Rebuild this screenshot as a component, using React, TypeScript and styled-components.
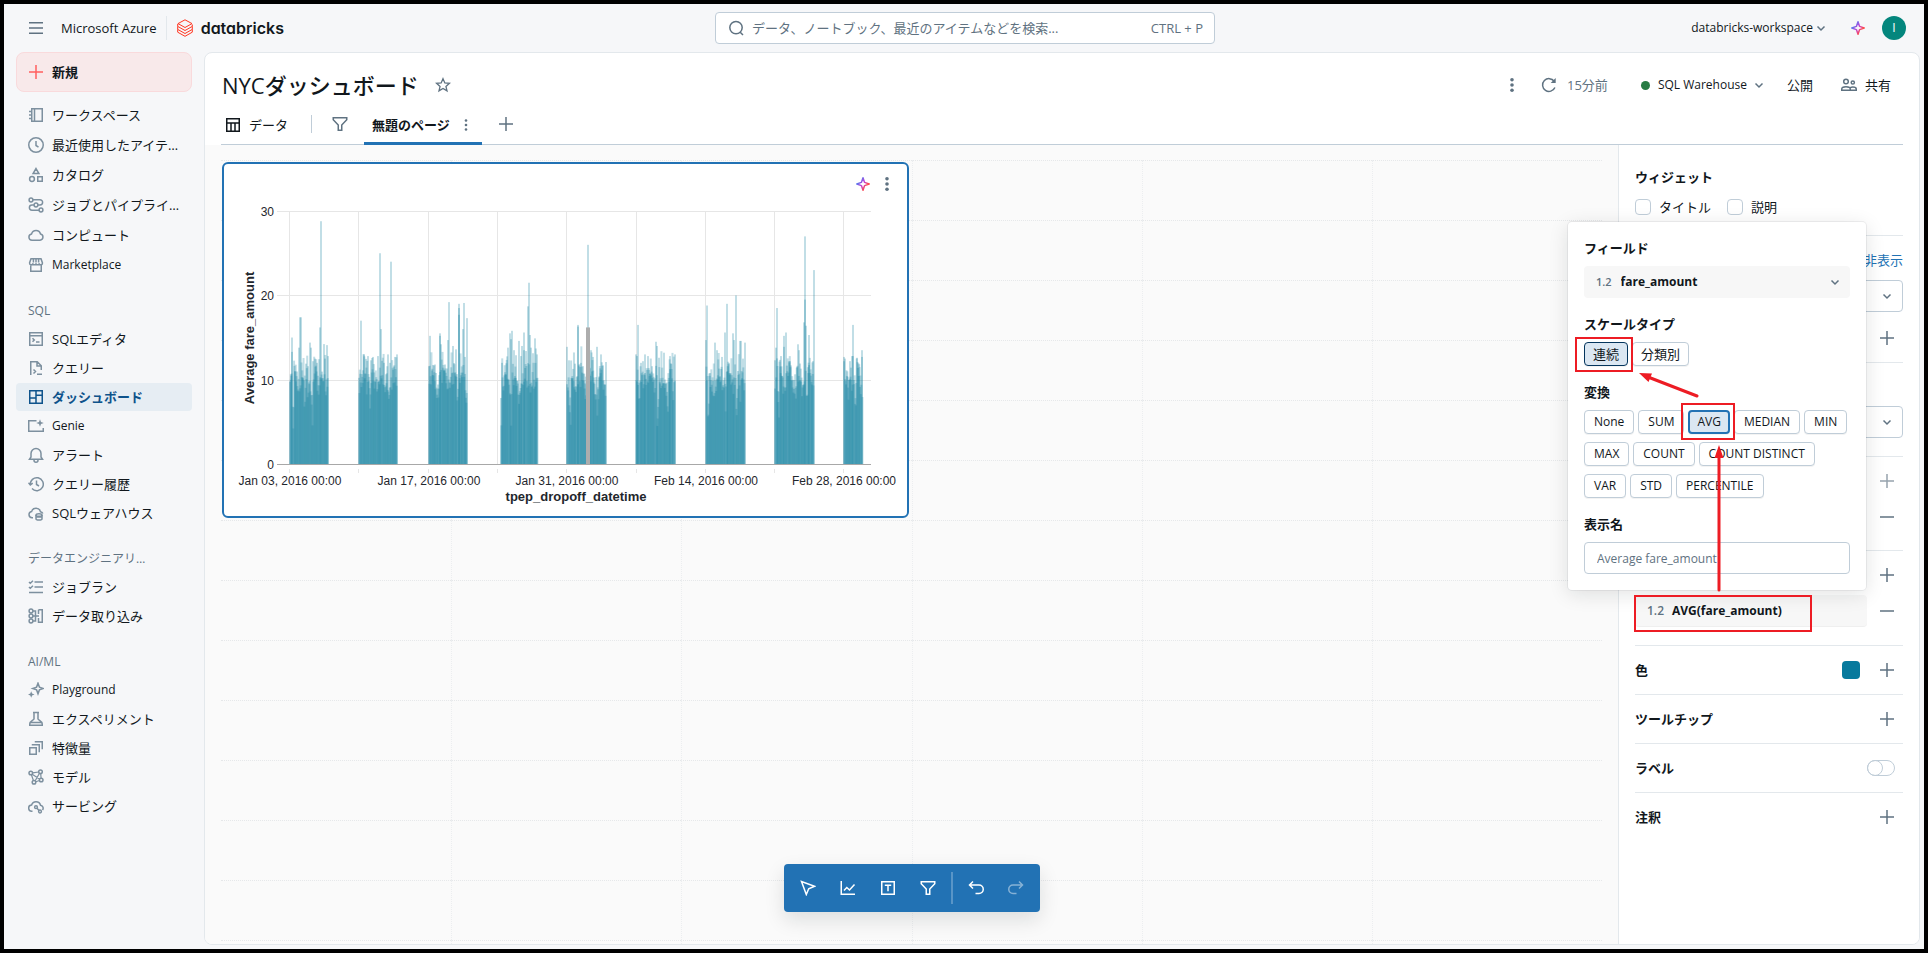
import React from 'react';
import styled, { createGlobalStyle, css } from 'styled-components';

const color = {
  text: '#11171c',
  muted: '#5f7281',
  icon: '#7d909f',
  line: '#c0cdd8',
  softLine: '#e3e8ec',
  blue: '#2272b4',
  chrome: '#f6f7f9',
  canvas: '#fafafa',
  field: '#f7f7f7',
  series: '#077a9d',
  mark: '#ed1c24',
};

const GlobalStyle = createGlobalStyle`
  *, *::before, *::after { box-sizing: border-box; }
  body {
    margin: 0;
    background: #000;
    color: ${color.text};
    font-family: "Open Sans", "Noto Sans CJK JP", sans-serif;
    font-size: 13px;
    line-height: 20px;
  }
  button, input, select { font: inherit; color: inherit; }
  svg { display: block; flex: none; }
`;

/* ---------- icons ---------- */

const Svg16 = styled.svg.attrs({ viewBox: '0 0 16 16', width: 16, height: 16, 'aria-hidden': true })`
  fill: none;
  stroke: currentColor;
  stroke-width: 1.5;
`;

const icons: Record<string, React.ReactNode> = {
  menu: <path d="M1 2.75h14M1 8h14M1 13.25h14" />,
  plus: <path d="M8 1v14M1 8h14" />,
  minus: <path d="M1 8h14" />,
  chevron: <path d="M4.5 6.5 8 10l3.5-3.5" />,
  kebab: (
    <g fill="currentColor" stroke="none">
      <circle cx="8" cy="2.7" r="1.8" />
      <circle cx="8" cy="8" r="1.8" />
      <circle cx="8" cy="13.3" r="1.8" />
    </g>
  ),
  kebabSmall: (
    <g fill="currentColor" stroke="none">
      <circle cx="8" cy="3.5" r="1.3" />
      <circle cx="8" cy="8" r="1.3" />
      <circle cx="8" cy="12.5" r="1.3" />
    </g>
  ),
  search: (
    <>
      <circle cx="8" cy="7.6" r="6.2" />
      <path d="m12.2 12.2 2.8 2.8" />
    </>
  ),
  notebook: <path d="M3.75 1.75h10.5v12.5H3.75zM6.5 1.75v12.5M1 4.5h2.5M1 8h2.5M1 11.5h2.5" />,
  clock: (
    <>
      <circle cx="8" cy="8" r="7.25" />
      <path d="M8 4v4.5l2.5 1.6" />
    </>
  ),
  catalog: (
    <>
      <path d="m8 1.6 2.9 5H5.1zM9.75 9.75h4.5v4.5h-4.5z" />
      <circle cx="4" cy="12" r="2.4" />
    </>
  ),
  jobs: (
    <>
      <circle cx="3" cy="3" r="1.9" />
      <circle cx="13" cy="13" r="1.9" />
      <circle cx="8" cy="8" r="1.9" />
      <path d="M5 2.75h7a2.6 2.6 0 0 1 0 5.2h-2M6 8H4a2.6 2.6 0 0 0 0 5.2h7" />
    </>
  ),
  cloud: <path d="M4 13.25h8a3.2 3.2 0 0 0 .5-6.3A4.6 4.6 0 0 0 3.6 6.9 3.2 3.2 0 0 0 4 13.25z" />,
  store: <path d="M2.75 8.5v5.75h10.5V8.5M3 1.75h10l1.4 4v.5a1.6 1.6 0 0 1-3.2 0 1.6 1.6 0 0 1-3.2 0 1.6 1.6 0 0 1-3.2 0 1.6 1.6 0 0 1-3.2 0v-.5zM5.4 2v3.5M8 2v3.5M10.6 2v3.5" />,
  editor: <path d="M1.75 1.75h12.5v12.5H1.75zM1.75 4.75h12.5M4.5 7.2l1.8 1.8-1.8 1.8M8 11h3.5" />,
  query: <path d="M2.75 15V1.75h6.5l4 4V10M9 2v4h4M5.5 9.5l2 2-2 2M9 14.25h5" />,
  dashboard: <path d="M1.75 1.75h12.5v12.5H1.75zM8 1.75v12.5M1.75 9H8M8 6.2h6.25" />,
  genie: (
    <>
      <path d="M8.5 2.75H.75v10.5h14.5V10" />
      <path d="m12 1.2 1 2.8 2.8 1-2.8 1-1 2.8-1-2.8-2.8-1 2.8-1z" fill="currentColor" stroke="none" />
    </>
  ),
  bell: <path d="M1.5 12.25h13L13 10V6.5a5 5 0 0 0-10 0V10zM6 12.5v.7a2 2 0 0 0 4 0v-.7" />,
  history: <path d="M2.3 8.8a6.5 6.5 0 1 1 1.7 3.8M.5 6.8l1.8 2.2 2.4-1.8M8.5 4.5v4l2.5 1.5" />,
  warehouse: (
    <>
      <path d="M5 12.75H4A3.1 3.1 0 0 1 3.6 6.6a4.6 4.6 0 0 1 8.9.2c1.2.2 2 .9 2.4 1.7" />
      <ellipse cx="11" cy="10" rx="3" ry="1.3" />
      <path d="M8 10v3.7c0 .7 1.3 1.3 3 1.3s3-.6 3-1.3V10M8 12h6" />
    </>
  ),
  checklist: <path d="M6.5 3H15M6.5 8H15M1 13.5h14M1 3l1.3 1.3L5 1.8M1 8l1.3 1.3L5 6.8" />,
  ingest: (
    <>
      <circle cx="3" cy="3" r="1.9" />
      <circle cx="3" cy="8" r="1.9" />
      <circle cx="3" cy="13" r="1.9" />
      <path d="M5 3h2.5v10H5M5 8h6M10.5 1.75h3.75v12.5H10.5V10M10.5 1.75V6" />
    </>
  ),
  playground: (
    <>
      <path d="m10 1.2 1.4 3.9 3.9 1.4-3.9 1.4L10 11.8 8.6 7.9 4.7 6.5l3.9-1.4z" />
      <path d="m3.2 9.2.9 2.4 2.4.9-2.4.9-.9 2.4-.9-2.4-2.4-.9 2.4-.9z" fill="currentColor" stroke="none" />
    </>
  ),
  experiment: <path d="M5 1.5h6M6 1.5V8c0 1-4.25 2-4.25 5v1.25h12.5V13c0-3-4.25-4-4.25-5V1.5M2 11.5h12" />,
  features: <path d="M1.75 7.75h6.5v6.5h-6.5zM4.5 5.5v-.75h6.75v6.75h-.75M7.5 2.5v-.75h6.75V8.5h-.75" />,
  model: (
    <>
      <circle cx="2.8" cy="4" r="1.8" />
      <circle cx="12.5" cy="2.8" r="1.8" />
      <circle cx="13.2" cy="11" r="1.8" />
      <circle cx="6" cy="13.2" r="1.8" />
      <path d="m4.6 3.8 6.1-.8M12.7 4.6l.4 4.6M11.5 11.5l-3.7 1.2M3.4 5.8l2 5.7M4.2 5.2l7.3 4.7M7.2 11.7l4.3-7.5" strokeWidth="1.2" />
    </>
  ),
  serving: (
    <>
      <path d="M4.5 13.25H4A3.1 3.1 0 0 1 3.6 7a4.6 4.6 0 0 1 8.9.2A3 3 0 0 1 14.5 12" />
      <circle cx="8" cy="9.2" r="1.4" />
      <circle cx="12" cy="13.5" r="1.4" />
      <path d="m9 10.2 2 2.3" />
    </>
  ),
  star: <path d="m8 1.7 1.85 4.25 4.6.4-3.5 3.05L12 13.9l-4-2.4-4 2.4 1.05-4.5-3.5-3.05 4.6-.4z" strokeWidth="1.3" />,
  refresh: (
    <>
      <path d="M13.9 10.5A6.4 6.4 0 1 1 13.2 4.3" />
      <path d="M14.7 1v5h-5z" fill="currentColor" stroke="none" />
    </>
  ),
  people: (
    <>
      <circle cx="5" cy="4.5" r="2.3" />
      <circle cx="11.8" cy="5.5" r="1.6" />
      <path d="M.75 13.25V12c0-1.3 2-2.3 4.25-2.3s4.25 1 4.25 2.3v1.25zM9.5 13.25h5.75V12c0-1.1-1.4-2-3.4-2-1 0-1.9.2-2.6.6" />
    </>
  ),
  table: <path d="M1.75 1.75h12.5v12.5H1.75zM1.75 6h12.5M6 6v8.25M10 6v8.25" />,
  filter: <path d="M1.25 1.75h13.5v2L9.75 9v5.25h-3.5V9l-5-5.25z" />,
  cursor: <path d="m1.5 1.5 4.8 13 2.4-5.8 5.8-2.4z" />,
  chart: <path d="M1.25 1v13.25H15M4 10.5l2.8-3 2.7 2.5 5-5.5" />,
  textBox: <path d="M1.75 1.75h12.5v12.5H1.75zM4.8 5.2h6.4M8 5.2v6" />,
  undo: <path d="M5 1.5 1.5 5 5 8.5M1.8 5H11a4.25 4.25 0 0 1 0 8.5H7.5" />,
  redo: <path d="M11 1.5 14.5 5 11 8.5M14.2 5H5a4.25 4.25 0 0 0 0 8.5h3.5" />,
};

const Icon = ({ name }: { name: string }) => <Svg16>{icons[name]}</Svg16>;

const Sparkle = ({ id }: { id: string }) => (
  <Svg16>
    <defs>
      <linearGradient id={id} x1="2" y1="4" x2="13" y2="12" gradientUnits="userSpaceOnUse">
        <stop offset="0.1" stopColor="#4a7ff0" />
        <stop offset="0.5" stopColor="#c145d8" />
        <stop offset="0.85" stopColor="#ff4b4b" />
      </linearGradient>
    </defs>
    <path
      stroke={`url(#${id})`}
      strokeLinejoin="round"
      d="M8 1.8 9.6 6.4 14.2 8 9.6 9.6 8 14.2 6.4 9.6 1.8 8 6.4 6.4z"
    />
  </Svg16>
);

const LogoMark = () => (
  <svg width="16" height="18" viewBox="0 0 16 18" fill="none" stroke="#ff3621" strokeWidth="1" aria-hidden>
    <path d="M8 .8 1 4.6l7 3.9 7-3.9z" />
    <path d="M.7 4.8v2.6L8 11.5l7.3-4.1V5.5M.7 7.4v3L8 14.5l7.3-4.1v-3M.7 10.4v2.8L8 17.3l7.3-4.1v-2.8" />
  </svg>
);

/* ---------- shell ---------- */

const Frame = styled.div`
  display: flex;
  flex-direction: column;
  height: 100vh;
  min-height: 840px;
  border: 4px solid #000;
  background: ${color.chrome};
`;

const TopBar = styled.header`
  display: grid;
  grid-template-columns: 1fr minmax(0, 500px) 1fr;
  align-items: center;
  height: 48px;
  padding: 0 18px 0 20px;
  flex: none;
`;

const Brand = styled.div`
  display: flex;
  align-items: center;
  padding-left: 4px;
`;

const IconButton = styled.button<{ $size?: number }>`
  display: inline-flex;
  align-items: center;
  justify-content: center;
  width: ${(p) => p.$size ?? 16}px;
  height: ${(p) => p.$size ?? 16}px;
  padding: 0;
  border: 0;
  background: none;
  color: ${color.muted};
  flex: none;
`;

const Latin = styled.span`
  font-size: 12px;
`;

const Cloud = styled.span`
  margin-left: 17px;
  padding-right: 9px;
  font-size: 13px;
  line-height: 24px;
  border-right: 1px solid ${color.softLine};
  white-space: nowrap;
`;

const Wordmark = styled.a`
  display: flex;
  align-items: center;
  gap: 8px;
  margin-left: 10px;
  color: ${color.text};
  text-decoration: none;
  font-family: Inter, sans-serif;
  font-feature-settings: "cv11";
  font-size: 16px;
  font-weight: 600;
`;

const SearchBox = styled.label`
  display: flex;
  align-items: center;
  gap: 8px;
  height: 32px;
  padding: 0 11px 0 12px;
  border: 1px solid ${color.line};
  border-radius: 4px;
  background: #fff;
  color: ${color.muted};

  input {
    flex: 1;
    min-width: 0;
    padding: 0;
    border: 0;
    outline: 0;
    background: none;
  }
  input::placeholder { color: ${color.muted}; opacity: 1; }
`;

const Account = styled.div`
  display: flex;
  align-items: center;
  justify-content: flex-end;
`;

const PlainButton = styled.button<{ $gap?: number }>`
  display: inline-flex;
  align-items: center;
  gap: ${(p) => p.$gap ?? 8}px;
  height: 32px;
  padding: 0;
  border: 0;
  background: none;
  white-space: nowrap;

  svg { color: ${color.muted}; }
`;

const WorkspaceButton = styled(PlainButton)`
  margin-right: 21px;
`;

const Avatar = styled.button`
  width: 24px;
  height: 24px;
  margin-left: 16px;
  padding: 0;
  border: 0;
  border-radius: 50%;
  background: #04867d;
  color: #fff;
  font-size: 12px;
  line-height: 24px;
`;

const Body = styled.div`
  display: flex;
  flex: 1;
  min-height: 0;
  padding: 0 4px 4px 0;
`;

/* ---------- side navigation ---------- */

const Nav = styled.nav`
  width: 200px;
  flex: none;
  padding: 0 12px;
`;

const NewButton = styled.button`
  display: flex;
  align-items: center;
  gap: 8px;
  width: 100%;
  height: 40px;
  padding: 0 11px;
  border: 1px solid #f9dadc;
  border-radius: 8px;
  background: #f8e9ea;
  font-weight: 600;

  svg { color: #ff5f5f; }
`;

const NavList = styled.ul<{ $rowHeight: number; $top: number }>`
  display: grid;
  grid-auto-rows: ${(p) => p.$rowHeight}px;
  gap: 1px;
  margin: ${(p) => p.$top}px 0 0;
  padding: 0;
  list-style: none;
`;

const NavLink = styled.a<{ $active?: boolean }>`
  display: flex;
  align-items: center;
  gap: 8px;
  height: 100%;
  padding-left: 12px;
  border-radius: 4px;
  color: ${color.text};
  text-decoration: none;
  white-space: nowrap;

  svg { color: ${color.icon}; }

  ${(p) =>
    p.$active &&
    css`
      background: #e6edf3;
      color: #0e538b;
      font-weight: 600;
      svg { color: #0e538b; }
    `}
`;

const NavHeading = styled.h2`
  margin: 22px 0 0 12px;
  color: ${color.muted};
  font-size: 12px;
  font-weight: 400;
  line-height: 20px;
`;

type NavEntry = { icon: string; label: string; latin?: boolean; active?: boolean };

const mainNav: NavEntry[] = [
  { icon: 'notebook', label: 'ワークスペース' },
  { icon: 'clock', label: '最近使用したアイテ…' },
  { icon: 'catalog', label: 'カタログ' },
  { icon: 'jobs', label: 'ジョブとパイプライ…' },
  { icon: 'cloud', label: 'コンピュート' },
  { icon: 'store', label: 'Marketplace', latin: true },
];

const navGroups: { title: string; items: NavEntry[] }[] = [
  {
    title: 'SQL',
    items: [
      { icon: 'editor', label: 'SQLエディタ' },
      { icon: 'query', label: 'クエリー' },
      { icon: 'dashboard', label: 'ダッシュボード', active: true },
      { icon: 'genie', label: 'Genie', latin: true },
      { icon: 'bell', label: 'アラート' },
      { icon: 'history', label: 'クエリー履歴' },
      { icon: 'warehouse', label: 'SQLウェアハウス' },
    ],
  },
  {
    title: 'データエンジニアリ…',
    items: [
      { icon: 'checklist', label: 'ジョブラン' },
      { icon: 'ingest', label: 'データ取り込み' },
    ],
  },
  {
    title: 'AI/ML',
    items: [
      { icon: 'playground', label: 'Playground', latin: true },
      { icon: 'experiment', label: 'エクスペリメント' },
      { icon: 'features', label: '特徴量' },
      { icon: 'model', label: 'モデル' },
      { icon: 'serving', label: 'サービング' },
    ],
  },
];

const NavItems = ({ items, rowHeight, top }: { items: NavEntry[]; rowHeight: number; top: number }) => (
  <NavList $rowHeight={rowHeight} $top={top}>
    {items.map((item) => (
      <li key={item.label}>
        <NavLink href="#" $active={item.active} aria-current={item.active ? 'page' : undefined}>
          <Icon name={item.icon} />
          {item.latin ? <Latin>{item.label}</Latin> : <span>{item.label}</span>}
        </NavLink>
      </li>
    ))}
  </NavList>
);

/* ---------- dashboard header ---------- */

const Main = styled.main`
  display: flex;
  flex-direction: column;
  flex: 1;
  min-width: 0;
  border: 1px solid ${color.softLine};
  border-radius: 8px;
  background: #fff;
  overflow: hidden;
`;

const TitleRow = styled.div`
  display: flex;
  align-items: center;
  height: 32px;
  margin: 16px 16px 0 17px;
  flex: none;
`;

const Title = styled.h1`
  margin: 0 16px 0 0;
  font-size: 22px;
  font-weight: 500;
  line-height: 32px;
  white-space: nowrap;
`;

const Actions = styled.div`
  display: flex;
  align-items: center;
  gap: 4px;
  margin-left: auto;
`;

const RefreshButton = styled(PlainButton)`
  margin: 0 17px 0 17px;
  color: ${color.muted};
`;

const ActionButton = styled(PlainButton)`
  padding: 0 12px;
`;

const WarehouseButton = styled(PlainButton)`
  padding: 0 4px 0 12px;

  &::before {
    content: "";
    width: 9px;
    height: 9px;
    margin-right: 4px;
    border-radius: 50%;
    background: #277c43;
  }
`;

const Tabs = styled.div`
  display: flex;
  align-items: center;
  height: 41px;
  margin: 3px 16px 0;
  border-bottom: 1px solid ${color.line};
  flex: none;
`;

const Tab = styled.div<{ $active?: boolean }>`
  display: flex;
  align-items: center;
  gap: 8px;
  height: 41px;
  margin-bottom: -1px;
  padding: 0 8px 0 4px;

  ${(p) =>
    p.$active &&
    css`
      margin-left: 16px;
      margin-right: 16px;
      padding: 3px 8px 0;
      border-bottom: 3px solid ${color.blue};
      font-weight: 600;
    `}
`;

const TabDivider = styled.span`
  width: 1px;
  height: 18px;
  margin: 0 20px 0 15px;
  background: ${color.line};
`;

/* ---------- canvas ---------- */

const Workspace = styled.div`
  display: flex;
  flex: 1;
  min-height: 0;
`;

const Canvas = styled.section`
  position: relative;
  flex: 1;
  min-width: 0;
  padding: 15px 16px 0;
  background: ${color.canvas};
  overflow: hidden;
`;

const Board = styled.div`
  display: grid;
  grid-template-columns: repeat(6, minmax(0, 1fr));
  grid-auto-rows: 60px;
  height: 100%;
  overflow: hidden;
`;

const Cell = styled.div<{ $row: number; $column: number }>`
  grid-row: ${(p) => p.$row};
  grid-column: ${(p) => p.$column};
  border-top: 1px dotted #e6e8ea;
  border-left: ${(p) => (p.$column > 1 ? '1px dotted #eceef0' : '0')};
`;

const Widget = styled.article`
  grid-row: 1 / 7;
  grid-column: 1 / 4;
  z-index: 1;
  margin: 2px 3px 2px 1px;
  border: 2px solid ${color.blue};
  border-radius: 6px;
  background: #fff;
  overflow: hidden;
`;

const WidgetHeader = styled.div`
  display: flex;
  align-items: center;
  justify-content: flex-end;
  height: 40px;
  padding-right: 8px;
`;

const Plot = styled.svg`
  font-family: "Liberation Sans", Arial, sans-serif;
  font-size: 12px;
  fill: #1f272d;
`;

const Toolbar = styled.div`
  position: absolute;
  z-index: 2;
  left: 50%;
  bottom: 32px;
  transform: translateX(-50%);
  display: flex;
  align-items: center;
  height: 48px;
  padding: 0 4px;
  border-radius: 4px;
  background: ${color.blue};
  box-shadow: 0 8px 20px rgba(17, 23, 28, 0.12);
`;

const ToolButton = styled(IconButton)`
  color: #fff;
  &:disabled { opacity: 0.45; }
`;

const ToolDivider = styled.span`
  width: 2px;
  height: 32px;
  margin: 0 3px;
  background: rgba(255, 255, 255, 0.25);
`;

/* ---------- chart data: hourly averages in weekly bursts ---------- */

type Burst = { start: number; hours: number; peaks: [number, number][]; dips: [number, number][] };

const bursts: Burst[] = [
  { start: 289, hours: 94, dips: [[3, 4], [22, 4.5], [15, 6.5]], peaks: [[2, 15], [2.4, 13.3], [9, 13.8], [10, 17.4], [11, 17.4], [5, 11], [16, 11.9], [18, 11.6], [20, 14.4], [21, 13.8], [25, 12.5], [27, 12], [30, 16.2], [31, 28.8], [35, 12.5], [37, 14.1], [38.3, 12.8]] },
  { start: 358, hours: 94, dips: [[11, 5.5], [30, 6], [22, 7]], peaks: [[2, 17], [5, 13], [9, 12.8], [12, 12.3], [14, 12.7], [19, 12.8], [21.4, 25], [22, 16], [25, 12], [29, 13], [32, 24], [31, 12], [36, 12.7], [38.3, 13]] },
  { start: 428, hours: 94, dips: [[37, 7], [28, 7.5]], peaks: [[0, 11.6], [1.2, 15.2], [6, 11.8], [10.6, 15.5], [11.4, 15.2], [12, 14.2], [16, 11.8], [19.2, 14.7], [20, 19.2], [24, 14], [27, 13.6], [29.5, 17.7], [30, 19], [30.5, 18.5], [34, 16], [35, 19.1], [35.8, 12.7], [38.3, 17.3]] },
  { start: 500, hours: 90, dips: [[0, 4.5], [17, 6], [18, 6.5], [10, 4.5]], peaks: [[1, 12], [7, 13.8], [8.5, 15.5], [10, 14.8], [11, 15.8], [13, 13.5], [15, 12.9], [17.8, 14.6], [20, 12.8], [21.5, 14], [22.5, 13.5], [23.5, 15.6], [25, 13.4], [26.5, 18.7], [28, 21.5], [28.5, 15.3], [30, 13.8], [33.5, 14.9], [36, 13]] },
  { start: 566, hours: 96, dips: [[3, 4.5], [31, 5.5], [32, 6.5]], peaks: [[0.4, 13.9], [2, 12.3], [8, 11.9], [10.8, 16.5], [11.3, 16.3], [16, 11.6], [21, 26], [24, 13.5], [26, 12.7], [30, 13.9], [34, 13], [36, 11.7], [38.8, 12.1]] },
  { start: 635, hours: 96, dips: [[22, 4], [31.5, 5], [3, 6]], peaks: [[0, 13], [0.8, 12.8], [2.4, 16.5], [5, 12], [9.5, 13], [12, 12.8], [16, 11.6], [19.6, 14.5], [20.4, 14], [23, 12.6], [28, 13.2], [34.5, 12.8], [38.5, 13]] },
  { start: 705, hours: 96, dips: [[2.5, 5.6], [20, 5.6], [31, 5], [34, 6.7]], peaks: [[0, 14.7], [1.4, 18.8], [9, 14.4], [11, 13.5], [16, 12.7], [19, 15.6], [20.4, 19], [27, 15.5], [28.4, 14.7], [30, 20], [34, 14.6], [35, 14.6], [37, 12.5], [38.8, 14.4]] },
  { start: 774, hours: 96, dips: [[3.5, 5], [21, 6], [32, 6.5]], peaks: [[0.4, 12.3], [1, 13.8], [1.6, 18.5], [6, 12.8], [9, 15.2], [9.6, 13.9], [11.3, 15.6], [15, 12.2], [22.8, 14.2], [24, 13.5], [29, 16.8], [30, 27], [30.5, 19.5], [31, 16.4], [34.5, 15.3], [38.8, 23], [38.2, 12.2]] },
  { start: 843, hours: 46, dips: [[11.5, 5.6], [4, 7]], peaks: [[0.4, 12.7], [1, 12.5], [6, 12.2], [8, 12.8], [9, 16.5], [9.6, 12.8], [13, 12.6], [17.5, 12.7], [18.2, 13.5]] },
];

const zeroY = 464;
const unit = 8.43;
const hourWidth = 0.41;

const buildBars = () => {
  let seed = 7;
  const random = () => {
    seed = (seed * 16807) % 2147483647;
    return seed / 2147483647;
  };
  const bars: { x: number; value: number }[] = [];
  bursts.forEach(({ start, hours, peaks, dips }) => {
    const peakAt = new Map(peaks.map(([at, value]) => [Math.round(at / hourWidth), value]));
    for (let h = 0; h < hours; h += 1) {
      const offset = h * hourWidth;
      const peak = peakAt.get(h);
      const dip = dips.find(([at]) => Math.abs(at - offset) < 0.7);
      if (peak !== undefined) {
        bars.push({ x: Math.round(start + offset), value: peak });
      } else if (dip) {
        bars.push({ x: start + offset, value: dip[1] + random() * 4 });
      } else {
        const daily = Math.sin((h / 24) * Math.PI * 2 - 1) * 0.8;
        const lift = random() > 0.75 ? random() * 2.2 : 0;
        bars.push({ x: start + offset, value: 8 + daily + (random() + random()) * 2 + lift });
      }
    }
  });
  return bars;
};

const bars = buildBars();
const gridX = [289, 358, 428, 497, 566, 636, 705, 774, 843];
const dateLabels = ['Jan 03, 2016 00:00', 'Jan 17, 2016 00:00', 'Jan 31, 2016 00:00', 'Feb 14, 2016 00:00', 'Feb 28, 2016 00:00'];

const FareChart = () => (
  <Plot width="683" height="312" viewBox="224 204 683 312" role="img" aria-label="Average fare_amount">
    {[30, 20, 10].map((v) => (
      <rect key={v} x="277" y={Math.round(zeroY - v * unit)} width="594" height="1" fill="#e6e6e6" />
    ))}
    {gridX.map((x) => (
      <g key={x} fill="#e6e6e6">
        <rect x={x} y="211" width="1" height="253" />
        <rect x={x} y="469" width="1" height="4" />
      </g>
    ))}
    {bars.map((bar, i) => (
      <rect
        key={i}
        x={bar.x}
        y={zeroY - bar.value * unit}
        width="2"
        height={bar.value * unit}
        fill={color.series}
        fillOpacity="0.25"
      />
    ))}
    <rect x="586" y={zeroY - 16.2 * unit} width="4" height={16.2 * unit} fill="#adadad" />
    <rect x="277" y={zeroY} width="594" height="1" fill="#a8a8a8" />
    {[0, 10, 20, 30].map((v) => (
      <text key={v} x="274" y={zeroY - v * unit + 5} textAnchor="end">
        {v}
      </text>
    ))}
    {dateLabels.map((label, i) => (
      <text key={label} x={gridX[i * 2] + 1} y="485" textAnchor="middle">
        {label}
      </text>
    ))}
    <text x="576" y="501" textAnchor="middle" fontSize="13" fontWeight="700">
      tpep_dropoff_datetime
    </text>
    <text transform="translate(254 338) rotate(-90)" textAnchor="middle" fontSize="13" fontWeight="700">
      Average fare_amount
    </text>
  </Plot>
);

/* ---------- settings panel ---------- */

const Panel = styled.aside`
  position: relative;
  width: 301px;
  flex: none;
  border-left: 1px solid ${color.softLine};
  background: #fff;
`;

const Section = styled.section<{ $top: number; $bottom: number; $gap?: number }>`
  display: flex;
  flex-direction: column;
  gap: ${(p) => p.$gap ?? 10}px;
  margin: 0 16px;
  padding: ${(p) => p.$top}px 0 ${(p) => p.$bottom}px;
  border-bottom: 1px solid ${color.softLine};

  &:last-of-type { border-bottom: 0; }
`;

const SectionHeading = styled.h3`
  flex: 1;
  margin: 0;
  font-size: 13px;
  font-weight: 600;
  line-height: 20px;
`;

const Row = styled.div<{ $height?: number }>`
  display: flex;
  align-items: center;
  justify-content: flex-end;
  min-height: ${(p) => p.$height ?? 32}px;
  padding-right: 8px;
`;

const FaintIconButton = styled(IconButton)`
  opacity: 0.65;
`;

const CheckRow = styled.div`
  display: flex;
  gap: 16px;
`;

const Check = styled.label`
  display: flex;
  align-items: center;
  gap: 8px;

  input {
    appearance: none;
    width: 16px;
    height: 16px;
    margin: 0;
    border: 1px solid ${color.line};
    border-radius: 4px;
    background: #fff;
  }
`;

const HideLink = styled.a`
  align-self: flex-end;
  color: ${color.blue};
  text-decoration: none;
`;

const SelectBox = styled.div`
  display: flex;
  align-items: center;
  height: 32px;
  padding-right: 7px;
  border: 1px solid ${color.line};
  border-radius: 4px;
  color: ${color.muted};

  select {
    flex: 1;
    min-width: 0;
    height: 100%;
    padding: 0;
    border: 0;
    appearance: none;
    background: none;
    outline: 0;
  }
`;

const FieldBox = styled(SelectBox)`
  padding: 0 7px 0 12px;
  border: 0;
  background: ${color.field};

  select {
    padding-left: 9px;
    color: ${color.text};
    font-size: 12px;
    font-weight: 700;
  }
`;

const NumberTag = styled.span<{ $large?: boolean }>`
  color: ${color.muted};
  font-size: ${(p) => (p.$large ? 12 : 11)}px;
  font-weight: 600;
`;

const FieldPill = styled.button`
  display: flex;
  align-items: center;
  gap: 8px;
  flex: 1;
  height: 32px;
  margin-right: 12px;
  padding: 0 12px;
  border: 0;
  border-bottom: 1px solid #efefef;
  border-radius: 4px;
  background: ${color.field};
  font-size: 12px;
  font-weight: 700;
`;

const Swatch = styled.button`
  width: 18px;
  height: 18px;
  margin-right: 19px;
  padding: 0;
  border: 0;
  border-radius: 4px;
  background: ${color.series};
`;

const Switch = styled.input`
  appearance: none;
  width: 28px;
  height: 16px;
  margin: 0;
  border: 1px solid ${color.line};
  border-radius: 8px;
  background: #fff;

  &::before {
    content: "";
    display: block;
    width: 16px;
    height: 16px;
    margin: -1px;
    border: 1px solid ${color.line};
    border-radius: 50%;
  }
`;

const Popover = styled.div`
  position: absolute;
  z-index: 3;
  top: 77px;
  right: 53px;
  width: 298px;
  padding: 16px;
  border-radius: 4px;
  background: #fff;
  box-shadow: 0 0 0 1px rgba(17, 23, 28, 0.06), 0 4px 20px rgba(17, 23, 28, 0.12);
`;

const Group = styled.div`
  & + & { margin-top: 16px; }
`;

const GroupLabel = styled.label`
  display: block;
  margin-bottom: 8px;
  font-weight: 600;
`;

const Chips = styled.div`
  display: flex;
  flex-wrap: wrap;
  gap: 8px 4px;
`;

const Chip = styled.button<{ $state?: 'on' | 'focus' }>`
  height: 24px;
  padding: 0 8px;
  border: 1px solid ${(p) => (p.$state === 'on' ? '#04355d' : color.line)};
  border-radius: 4px;
  background: ${(p) => (p.$state ? '#dbe7f2' : '#fff')};
  box-shadow: 0 1px 0 rgba(17, 23, 28, 0.05);
  line-height: 22px;
  white-space: nowrap;
`;

const LatinChip = styled(Chip)`
  padding: 0 9px;
  font-size: 12px;

  ${(p) =>
    p.$state === 'focus' &&
    css`
      padding: 0 7px;
      border: 2px solid ${color.blue};
      line-height: 20px;
    `}
`;

const TextInput = styled.input`
  display: block;
  width: 100%;
  height: 32px;
  padding: 0 12px;
  border: 1px solid ${color.line};
  border-radius: 4px;
  background: #fff;
  outline: 0;
  font-size: 12px;

  &::placeholder { color: ${color.muted}; opacity: 1; }
`;

const Marks = styled.svg`
  position: absolute;
  z-index: 4;
  top: 0;
  right: 0;
  pointer-events: none;
`;

const transforms = ['None', 'SUM', 'AVG', 'MEDIAN', 'MIN', 'MAX', 'COUNT', 'COUNT DISTINCT', 'VAR', 'STD', 'PERCENTILE'];

const FieldPopover = () => (
  <Popover role="dialog" aria-label="AVG(fare_amount)">
    <Group>
      <GroupLabel htmlFor="field">フィールド</GroupLabel>
      <FieldBox>
        <NumberTag>1.2</NumberTag>
        <select id="field" defaultValue="fare_amount">
          <option>fare_amount</option>
        </select>
        <Icon name="chevron" />
      </FieldBox>
    </Group>
    <Group>
      <GroupLabel as="div">スケールタイプ</GroupLabel>
      <Chips>
        <Chip $state="on">連続</Chip>
        <Chip>分類別</Chip>
      </Chips>
    </Group>
    <Group>
      <GroupLabel as="div">変換</GroupLabel>
      <Chips>
        {transforms.map((name) => (
          <LatinChip key={name} $state={name === 'AVG' ? 'focus' : undefined}>
            {name}
          </LatinChip>
        ))}
      </Chips>
    </Group>
    <Group>
      <GroupLabel htmlFor="display-name">表示名</GroupLabel>
      <TextInput id="display-name" placeholder="Average fare_amount" />
    </Group>
  </Popover>
);

const Annotations = () => (
  <Marks width="360" height="500" viewBox="1559 145 360 500" fill="none" stroke={color.mark} strokeWidth="2" aria-hidden>
    <rect x="1576" y="338" width="56" height="33" />
    <rect x="1682" y="404" width="52" height="35" />
    <rect x="1635" y="596" width="176" height="35" />
    <path d="M1697 396 1648 377M1719 590V455" strokeWidth="3" strokeLinecap="round" />
    <path d="M1639 373l13 .5-3.5 8.5zM1719 445l4.5 13h-9z" fill={color.mark} stroke="none" />
  </Marks>
);

const Settings = () => (
  <Panel>
    <Section $top={22} $bottom={18}>
      <SectionHeading>ウィジェット</SectionHeading>
      <CheckRow>
        <Check>
          <input type="checkbox" />
          タイトル
        </Check>
        <Check>
          <input type="checkbox" />
          説明
        </Check>
      </CheckRow>
    </Section>
    <Section $top={14} $bottom={8}>
      <HideLink href="#">非表示</HideLink>
      <SelectBox>
        <select aria-label="データセット" />
        <Icon name="chevron" />
      </SelectBox>
      <Row>
        <IconButton aria-label="追加">
          <Icon name="plus" />
        </IconButton>
      </Row>
    </Section>
    <Section $top={43} $bottom={18}>
      <SelectBox>
        <select aria-label="可視化" />
        <Icon name="chevron" />
      </SelectBox>
    </Section>
    <Section $top={8} $bottom={17} $gap={4}>
      <Row>
        <FaintIconButton aria-label="追加">
          <Icon name="plus" />
        </FaintIconButton>
      </Row>
      <Row>
        <IconButton aria-label="削除">
          <Icon name="minus" />
        </IconButton>
      </Row>
    </Section>
    <Section $top={8} $bottom={18} $gap={4}>
      <Row>
        <IconButton aria-label="追加">
          <Icon name="plus" />
        </IconButton>
      </Row>
      <Row>
        <FieldPill>
          <NumberTag $large>1.2</NumberTag>
          AVG(fare_amount)
        </FieldPill>
        <IconButton aria-label="削除">
          <Icon name="minus" />
        </IconButton>
      </Row>
    </Section>
    <Section $top={0} $bottom={0}>
      <Row $height={48}>
        <SectionHeading>色</SectionHeading>
        <Swatch aria-label="色" />
        <IconButton aria-label="追加">
          <Icon name="plus" />
        </IconButton>
      </Row>
    </Section>
    <Section $top={0} $bottom={0}>
      <Row $height={48}>
        <SectionHeading>ツールチップ</SectionHeading>
        <IconButton aria-label="追加">
          <Icon name="plus" />
        </IconButton>
      </Row>
    </Section>
    <Section $top={0} $bottom={0}>
      <Row $height={48}>
        <SectionHeading as="label" htmlFor="labels">
          ラベル
        </SectionHeading>
        <Switch id="labels" type="checkbox" role="switch" />
      </Row>
    </Section>
    <Section $top={0} $bottom={0}>
      <Row $height={48}>
        <SectionHeading>注釈</SectionHeading>
        <IconButton aria-label="追加">
          <Icon name="plus" />
        </IconButton>
      </Row>
    </Section>
    <FieldPopover />
    <Annotations />
  </Panel>
);

/* ---------- page ---------- */

const rows = Array.from({ length: 14 }, (_, i) => i + 1);
const columns = [1, 2, 3, 4, 5, 6];

export default function App() {
  return (
    <>
      <GlobalStyle />
      <Frame>
        <TopBar>
          <Brand>
            <IconButton aria-label="メニュー">
              <Icon name="menu" />
            </IconButton>
            <Cloud>Microsoft Azure</Cloud>
            <Wordmark href="#">
              <LogoMark />
              databricks
            </Wordmark>
          </Brand>
          <SearchBox>
            <Icon name="search" />
            <input type="text" placeholder="データ、ノートブック、最近のアイテムなどを検索..." />
            <span>CTRL + P</span>
          </SearchBox>
          <Account>
            <WorkspaceButton $gap={0}>
              <Latin>databricks-workspace</Latin>
              <Icon name="chevron" />
            </WorkspaceButton>
            <IconButton aria-label="アシスタント">
              <Sparkle id="spark-top" />
            </IconButton>
            <Avatar>I</Avatar>
          </Account>
        </TopBar>
        <Body>
          <Nav>
            <NewButton>
              <Icon name="plus" />
              新規
            </NewButton>
            <NavItems items={mainNav} rowHeight={29} top={8} />
            {navGroups.map((group) => (
              <React.Fragment key={group.title}>
                <NavHeading>{group.title}</NavHeading>
                <NavItems items={group.items} rowHeight={28} top={4} />
              </React.Fragment>
            ))}
          </Nav>
          <Main>
            <TitleRow>
              <Title>NYCダッシュボード</Title>
              <IconButton aria-label="お気に入り">
                <Icon name="star" />
              </IconButton>
              <Actions>
                <IconButton aria-label="その他">
                  <Icon name="kebab" />
                </IconButton>
                <RefreshButton $gap={10}>
                  <Icon name="refresh" />
                  15分前
                </RefreshButton>
                <WarehouseButton $gap={4}>
                  <Latin>SQL Warehouse</Latin>
                  <Icon name="chevron" />
                </WarehouseButton>
                <ActionButton>公開</ActionButton>
                <ActionButton>
                  <Icon name="people" />
                  共有
                </ActionButton>
              </Actions>
            </TitleRow>
            <Tabs>
              <Tab>
                <Icon name="table" />
                データ
              </Tab>
              <TabDivider />
              <IconButton aria-label="フィルター">
                <Icon name="filter" />
              </IconButton>
              <Tab $active>
                無題のページ
                <IconButton aria-label="ページのメニュー">
                  <Icon name="kebabSmall" />
                </IconButton>
              </Tab>
              <IconButton aria-label="ページを追加">
                <Icon name="plus" />
              </IconButton>
            </Tabs>
            <Workspace>
              <Canvas>
                <Board>
                  {rows.map((row) =>
                    columns.map((column) => <Cell key={`${row}-${column}`} $row={row} $column={column} />),
                  )}
                  <Widget>
                    <WidgetHeader>
                      <IconButton $size={24} aria-label="アシスタント">
                        <Sparkle id="spark-widget" />
                      </IconButton>
                      <IconButton $size={24} aria-label="その他">
                        <Icon name="kebab" />
                      </IconButton>
                    </WidgetHeader>
                    <FareChart />
                  </Widget>
                </Board>
                <Toolbar>
                  {['cursor', 'chart', 'textBox', 'filter'].map((name) => (
                    <ToolButton key={name} $size={40} aria-label={name}>
                      <Icon name={name} />
                    </ToolButton>
                  ))}
                  <ToolDivider />
                  <ToolButton $size={40} aria-label="undo">
                    <Icon name="undo" />
                  </ToolButton>
                  <ToolButton $size={40} aria-label="redo" disabled>
                    <Icon name="redo" />
                  </ToolButton>
                </Toolbar>
              </Canvas>
              <Settings />
            </Workspace>
          </Main>
        </Body>
      </Frame>
    </>
  );
}
